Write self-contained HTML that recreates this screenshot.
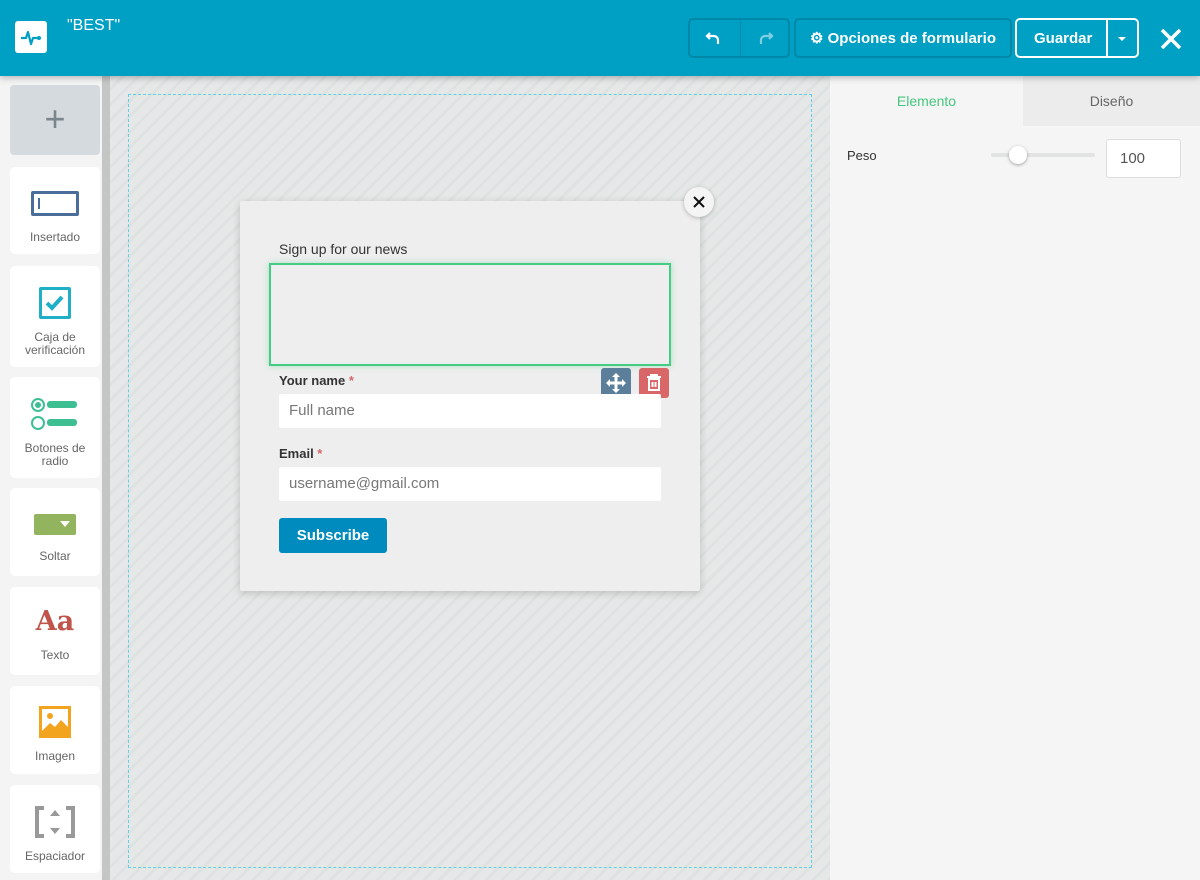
<!DOCTYPE html>
<html><head><meta charset="utf-8"><style>
*{box-sizing:border-box;margin:0;padding:0}
body{width:1200px;height:880px;overflow:hidden;font-family:"Liberation Sans",sans-serif;background:#f4f5f4;position:relative}
.hdr{position:absolute;left:0;top:0;width:1200px;height:76px;background:#009fc4;box-shadow:0 2px 6px rgba(0,0,0,.25);z-index:5}
.logo{position:absolute;left:15px;top:21px;width:32px;height:32px;background:#fff;border-radius:3px}
.title{position:absolute;left:67px;top:17px;color:#fff;font-size:16px}
.btn{position:absolute;top:18px;height:40px;border:2px solid #0088a8;border-radius:5px;color:#fff;font-weight:bold;font-size:15px;display:flex;align-items:center;justify-content:center}
.side{position:absolute;left:0;top:76px;width:102px;height:804px;background:#f3f4f3}
.scroll{position:absolute;left:102px;top:76px;width:8px;height:804px;background:#c4c6c6}
.card{position:absolute;left:10px;width:90px;background:#fff;border-radius:5px;text-align:center;font-size:12px;color:#666;line-height:13px}
.canvas{position:absolute;left:110px;top:76px;width:720px;height:804px;background:repeating-linear-gradient(135deg,#e6e8e8 0 8px,#dfe2e2 8px 11px)}
.dash{position:absolute;left:128px;top:94px;width:684px;height:774px;border:1px dashed #5fd0e8}
.pop{position:absolute;left:240px;top:201px;width:460px;height:390px;background:#eeeeee;box-shadow:0 2px 8px rgba(0,0,0,.18);border-radius:2px}
.lbl{position:absolute;left:39px;font-size:13px;font-weight:bold;color:#333}
.inp{position:absolute;left:39px;width:382px;height:34px;background:#fff;border-radius:2px;font-size:15px;color:#777;padding:8px 10px}
.right{position:absolute;left:830px;top:76px;width:370px;height:804px;background:#f4f5f4}
</style></head><body>
<div class="hdr">
 <div class="logo"><svg width="32" height="32" viewBox="0 0 32 32"><path d="M6 17h5l2-6 3 12 2-6h6" fill="none" stroke="#009fc4" stroke-width="2.2" stroke-linejoin="round"/><circle cx="24" cy="17" r="2" fill="#009fc4"/></svg></div>
 <div class="title">"BEST"</div>
 <div class="btn" style="left:688px;width:102px"></div>
 <div style="position:absolute;left:740px;top:20px;width:1px;height:36px;background:#0088a8"></div>
 <svg style="position:absolute;left:705px;top:29px" width="18" height="18" viewBox="0 0 18 18"><path d="M5 4L2 7l3 3M2 7h7a4 4 0 0 1 4 4v4" fill="none" stroke="#fff" stroke-width="2.2"/></svg>
 <svg style="position:absolute;left:756px;top:29px" width="18" height="18" viewBox="0 0 18 18"><path d="M13 4l3 3-3 3M16 7H9a4 4 0 0 0-4 4v4" fill="none" stroke="#7fcfe2" stroke-width="2.2"/></svg>
 <div class="btn" style="left:794px;width:218px">⚙&nbsp;Opciones de formulario</div>
 <div class="btn" style="left:1015px;width:124px;border-color:#fff;justify-content:flex-start;padding-left:17px">Guardar</div>
 <div style="position:absolute;left:1106px;top:20px;width:2px;height:36px;background:#fff"></div>
 <div style="position:absolute;left:1118px;top:37px;border:4px solid transparent;border-top:4px solid #fff;border-bottom:0"></div>
 <svg style="position:absolute;left:1159px;top:27px" width="24" height="24"><path d="M3 3l18 18M21 3L3 21" stroke="#fff" stroke-width="3.5"/></svg>
</div>
<div class="side">
 <div style="position:absolute;left:10px;top:9px;width:90px;height:70px;background:#d5dade;border-radius:4px;color:#7b868c;font-size:36px;text-align:center;line-height:68px">+</div>
 <div class="card" style="top:91px;height:87px"><div style="margin:24px auto 0;width:48px;height:25px;border:3px solid #4a6d9a;border-radius:2px;position:relative"><div style="position:absolute;left:4px;top:4px;width:2px;height:11px;background:#4a6d9a"></div></div><div style="margin-top:15px">Insertado</div></div>
 <div class="card" style="top:190px;height:101px"><div style="margin:21px auto 0;width:32px;height:32px;border:3px solid #1fb0c8;border-radius:2px"><svg width="26" height="26"><path d="M5 13l5 5 10-11" fill="none" stroke="#1fb0c8" stroke-width="4"/></svg></div><div style="margin-top:12px">Caja de<br>verificación</div></div>
 <div class="card" style="top:301px;height:101px"><svg style="margin-top:20px" width="50" height="34"><circle cx="8" cy="8" r="6" fill="none" stroke="#3ebf91" stroke-width="2"/><circle cx="8" cy="8" r="3" fill="#3ebf91"/><circle cx="8" cy="26" r="6" fill="none" stroke="#3ebf91" stroke-width="2"/><rect x="17" y="4" width="30" height="7" rx="3" fill="#3ebf91"/><rect x="17" y="22" width="30" height="7" rx="3" fill="#3ebf91"/></svg><div style="margin-top:8px">Botones de<br>radio</div></div>
 <div class="card" style="top:412px;height:88px"><div style="margin:26px auto 0;width:42px;height:21px;background:#93b45e;border-radius:2px;position:relative"><div style="position:absolute;right:6px;top:7px;border:5px solid transparent;border-top:6px solid #fff;border-bottom:0"></div></div><div style="margin-top:15px">Soltar</div></div>
 <div class="card" style="top:511px;height:88px"><div style="margin-top:20px;font-family:'DejaVu Serif',serif;font-weight:bold;font-size:27px;color:#c0544a;line-height:30px">Aa</div><div style="margin-top:12px">Texto</div></div>
 <div class="card" style="top:610px;height:88px"><svg style="margin-top:20px" width="32" height="32"><rect x="1.5" y="1.5" width="29" height="29" fill="none" stroke="#f2a41e" stroke-width="3"/><circle cx="11" cy="10" r="3" fill="#f2a41e"/><path d="M3 25l8-8 5 4 6-7 7 7v8H3z" fill="#f2a41e"/></svg><div style="margin-top:9px">Imagen</div></div>
 <div class="card" style="top:709px;height:88px"><svg style="margin-top:21px" width="40" height="32"><path d="M9 2H2v28h7M31 2h7v28h-7" fill="none" stroke="#999" stroke-width="4"/><path d="M20 4l5 6H15zM20 28l5-6H15z" fill="#999"/></svg><div style="margin-top:9px">Espaciador</div></div>
</div>
<div class="scroll"></div>
<div class="canvas"></div>
<div class="dash"></div>
<div class="pop">
 <div style="position:absolute;left:39px;top:40px;font-size:14px;color:#333">Sign up for our news</div>
 <div style="position:absolute;left:29px;top:62px;width:402px;height:103px;border:2px solid #44cc85;box-shadow:0 0 6px rgba(68,204,133,.4)"></div>
 <div style="position:absolute;left:361px;top:167px;width:30px;height:30px;background:#5b7f9a;border-radius:3px"><svg width="30" height="30"><path d="M15 7v16M7 15h16" stroke="#fff" stroke-width="3"/><path d="M15 5l4 4h-8zM15 25l4-4h-8zM5 15l4 4v-8zM25 15l-4 4v-8z" fill="#fff"/></svg></div>
 <div style="position:absolute;left:399px;top:167px;width:30px;height:30px;background:#d96767;border-radius:3px"><svg width="30" height="30"><path d="M8 9h14M12 9V7h6v2" stroke="#fff" stroke-width="2" fill="none"/><rect x="10" y="11" width="10" height="11" fill="none" stroke="#fff" stroke-width="2"/><path d="M13.5 14v5M16.5 14v5" stroke="#fff" stroke-width="2"/></svg></div>
 <div class="lbl" style="top:172px">Your name <span style="color:#d46a6a">*</span></div>
 <div class="inp" style="top:193px">Full name</div>
 <div class="lbl" style="top:245px">Email <span style="color:#d46a6a">*</span></div>
 <div class="inp" style="top:266px">username@gmail.com</div>
 <div style="position:absolute;left:39px;top:317px;width:108px;height:35px;background:#008bbe;border-radius:3px;color:#fff;font-weight:bold;font-size:15px;text-align:center;line-height:35px">Subscribe</div>
</div>
<div style="position:absolute;left:684px;top:187px;width:30px;height:30px;border-radius:50%;background:#f4f4f4;box-shadow:0 1px 4px rgba(0,0,0,.25)"><svg width="30" height="30"><path d="M10 10l10 10M20 10L10 20" stroke="#111" stroke-width="2"/></svg></div>
<div class="right">
 <div style="position:absolute;left:0;top:0;width:193px;height:50px;text-align:center;line-height:50px;font-size:14px;color:#44c77e">Elemento</div>
 <div style="position:absolute;left:193px;top:0;width:177px;height:50px;background:#ececec;text-align:center;line-height:50px;font-size:14px;color:#666">Diseño</div>
 <div style="position:absolute;left:17px;top:72px;font-size:13px;color:#333">Peso</div>
 <div style="position:absolute;left:161px;top:77px;width:104px;height:4px;background:#e2e3e3;border-radius:2px"></div>
 <div style="position:absolute;left:179px;top:70px;width:18px;height:18px;border-radius:50%;background:#fff;box-shadow:0 1px 3px rgba(0,0,0,.35)"></div>
 <div style="position:absolute;left:276px;top:63px;width:75px;height:39px;background:#fff;border:1px solid #ddd;border-radius:3px;font-size:15px;color:#555;padding:10px 13px">100</div>
</div>
</body></html>
